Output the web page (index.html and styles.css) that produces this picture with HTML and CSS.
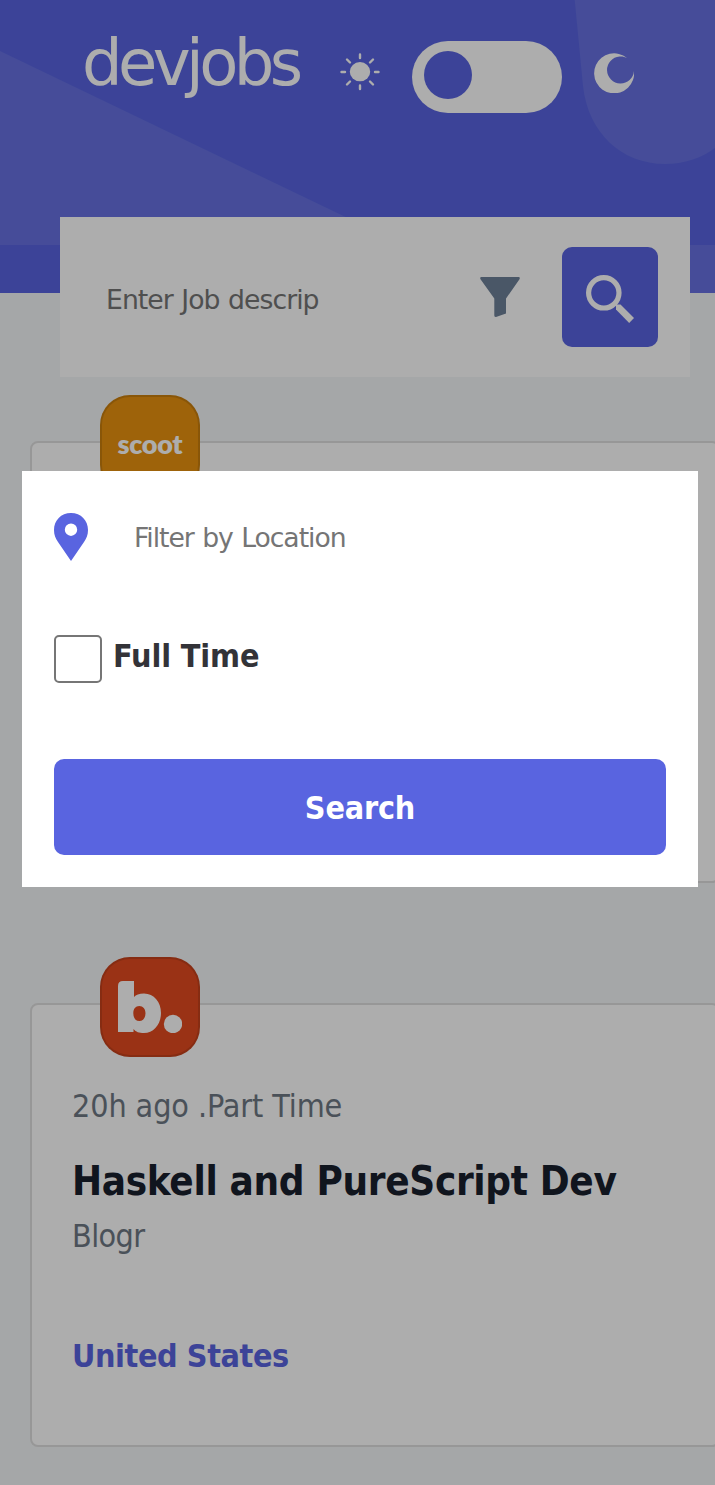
FILE: index.html
```html
<!DOCTYPE html>
<html lang="en">
<head>
<meta charset="utf-8">
<title>devjobs</title>
<link rel="stylesheet" href="styles.css">
</head>
<body>
<div class="page">
  <header class="header">
    <svg class="pattern" width="715" height="293" viewBox="0 0 715 293" aria-hidden="true">
      <path d="M0 51 404 245H0ZM574.700 0 583 86C588 133 622 164 665 164C684 164 702 158 715 148V0ZM596 245H715V293H600Z"/>
    </svg>
    <nav class="nav">
      <h1 class="brand">devjobs</h1>
      <svg class="sun" width="40" height="38" viewBox="0 0 40 38" aria-hidden="true">
        <ellipse cx="20" cy="18.700" rx="10.200" ry="9.600"/>
        <path d="M20 1.500V5M20 32.500V36M1.500 19H5M35 19H38.500M7 6.500 10 9.500M33 6.500 30 9.500M7 31.500 10 28.500M33 31.500 30 28.500"/>
      </svg>
      <div class="toggle"><span class="knob"></span></div>
      <svg class="moon" width="40" height="40" viewBox="0 0 40 40" aria-hidden="true">
        <path d="M33 5A20 20 0 1 0 40 18A13.500 13.500 0 1 1 25.500 3.500C28.500 3.200 31 4 33 5Z"/>
      </svg>
    </nav>
  </header>
  <form class="searchbar">
    <span class="search-text">Enter Job descrip</span>
    <svg class="funnel" width="40" height="40" viewBox="0 0 40 40" aria-hidden="true">
      <path d="M1.500 0H38.500Q40.500 0 39.500 2.300L26 21.500V36.500L16 40Q14.300 40 14.300 38.500V21.500L.5 2.300Q-.5 0 1.500 0Z"/>
    </svg>
    <button class="search-icon" type="button" aria-label="Search">
      <svg width="48" height="48" viewBox="0 0 48 48" aria-hidden="true">
        <circle cx="17.800" cy="17.800" r="15.200"/>
        <path d="M30 29.500H34.500L48 43 43.200 48 30 34.500Z"/>
      </svg>
    </button>
  </form>
  <main class="jobs">
    <article class="card card-first">
      <div class="logo logo-scoot"><span>scoot</span></div>
    </article>
    <article class="card card-second">
      <div class="logo logo-blogr">
        <svg width="64" height="52" viewBox="0 0 64 52" aria-hidden="true">
          <path fill-rule="evenodd" d="M5 0H16V16C18 14 21 12.500 26 12.500C36 12.500 43 21 43 32C43 43 36 52 26 52C21 52 18 51 15.500 48V51H0V5Q0 0 5 0ZM21.300 25C17.500 25 15.300 28 15.300 32.300C15.300 37 17.500 40 21.300 40C25 40 27.500 37 27.500 32.300C27.500 28 25 25 21.300 25Z"/>
          <circle cx="55" cy="43" r="9.200"/>
        </svg>
      </div>
      <p class="meta">20h ago .Part Time</p>
      <h2 class="title">Haskell and PureScript Dev</h2>
      <p class="company">Blogr</p>
      <p class="country">United States</p>
    </article>
  </main>
  <div class="overlay">
    <section class="modal">
      <div class="location">
        <svg width="34" height="48" viewBox="0 0 34 48" aria-hidden="true">
          <path fill-rule="evenodd" d="M17 0C7 0 0 7.500 0 17C0 22 1.500 25 4 29L17 48 30 29C32.500 25 34 22 34 17C34 7.500 27 0 17 0ZM17 10.500A6.200 6.200 0 1 1 17 22.900A6.200 6.200 0 1 1 17 10.500Z"/>
        </svg>
        <span class="location-text">Filter by Location</span>
      </div>
      <label class="fulltime"><span class="box"></span><span class="full-text">Full Time</span></label>
      <button class="submit" type="button"><span>Search</span></button>
    </section>
  </div>
</div>
</body>
</html>
```
FILE: styles.css
```css
* { box-sizing: border-box; margin: 0; padding: 0; }
body {
  width: 715px;
  height: 1485px;
  overflow: hidden;
  font-family: "DejaVu Sans Condensed", "DejaVu Sans", sans-serif;
  font-stretch: condensed;
}
button { border: 0; font: inherit; font-stretch: condensed; }
.page { position: relative; width: 715px; height: 1485px; overflow: hidden; background: #f4f6f8; }
.header { position: relative; height: 293px; background: #5964e0; }
.pattern { position: absolute; top: 0; left: 0; fill: #6771e2; }
.nav { position: relative; display: flex; align-items: flex-start; padding-left: 82px; color: #fff; }
.brand { width: 258px; padding-top: 23px; font-family: "DejaVu Sans", sans-serif; font-stretch: normal; font-size: 64px; font-weight: 400; line-height: 80px; letter-spacing: -4.6px; white-space: nowrap; }
.sun { margin-top: 53px; fill: #fff; stroke: #fff; stroke-width: 2.4; stroke-linecap: round; }
.sun ellipse { stroke: none; }
.toggle { width: 150px; height: 72px; margin: 41px 32px 0; padding: 10px 12px; border-radius: 36px; background: #fff; }
.knob { display: block; width: 48px; height: 48px; border-radius: 50%; background: #5964e0; }
.moon { margin-top: 53px; fill: #fff; }
.searchbar { position: relative; display: flex; width: 630px; height: 160px; margin: -76px 0 0 60px; padding: 30px 32px 0 46px; background: #fff; }
.search-text, .location-text { font-family: "DejaVu Sans", sans-serif; font-stretch: normal; font-size: 26.67px; color: #757575; white-space: nowrap; }
.search-text { width: 374px; padding-top: 33px; line-height: 40px; letter-spacing: -.95px; word-spacing: 1px; }
.funnel { margin-top: 30px; fill: #6e8098; }
.search-icon { width: 96px; height: 100px; margin-left: 42px; padding: 28px 24px 24px; border-radius: 10px; background: #5964e0; }
.search-icon svg { display: block; fill: #fff; }
.search-icon circle { fill: none; stroke: #fff; stroke-width: 5.2; }
.jobs { display: flex; flex-direction: column; gap: 120px; padding: 64px 0 0 30px; }
.card { position: relative; width: 690px; border: 2px solid #dfdfdf; border-radius: 8px; background: #fff; }
.card-first { height: 442px; }
.card-second { height: 444px; padding: 81px 40px 0; }
.logo { position: absolute; top: -48px; left: 68px; display: flex; align-items: center; justify-content: center; width: 100px; height: 100px; border: 2px solid rgba(0,0,0,.13); border-radius: 30px; color: #fff; }
.logo-scoot { padding-bottom: 3px; background: #e99210; font: 800 27px/30px "Lato", sans-serif; letter-spacing: -.3px; }
.logo-blogr { background: #e44b1f; }
.logo svg { fill: #fff; }
.meta, .company { font-size: 32px; line-height: 40px; color: #6e7883; letter-spacing: -.1px; white-space: nowrap; }
.title { margin-top: 30px; font-size: 40px; line-height: 50px; color: #19202d; letter-spacing: -.33px; white-space: nowrap; }
.company { margin-top: 10px; letter-spacing: -.6px; }
.country { margin-top: 80px; font-size: 32px; font-weight: 700; line-height: 40px; color: #5964e0; letter-spacing: -.4px; white-space: nowrap; }
.overlay { position: absolute; inset: 0; padding: 471px 17px 0 22px; background: rgba(0,0,0,.32); }
.modal { height: 416px; padding: 42px 32px 32px; background: #fff; }
.location { display: flex; align-items: center; height: 48px; fill: #5964e0; }
.location-text { margin-left: 46px; letter-spacing: -1.05px; word-spacing: 1px; }
.fulltime { display: flex; height: 48px; margin-top: 74px; font-size: 32px; font-weight: 700; line-height: 42px; color: #333338; }
.box { width: 48px; height: 48px; border: 2px solid #767676; border-radius: 5px; }
.full-text { margin-left: 11px; letter-spacing: -.1px; }
.submit { display: block; width: 612px; height: 96px; margin-top: 76px; padding-top: 2px; border-radius: 10px; background: #5964e0; color: #fff; font-size: 32px; font-weight: 700; letter-spacing: -.2px; }
```
